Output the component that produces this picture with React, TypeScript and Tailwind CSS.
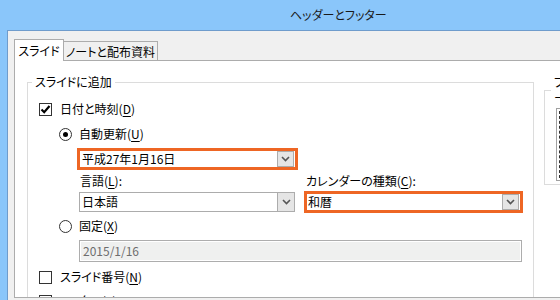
import React from 'react';

const font = { fontFamily: '"Noto Sans CJK JP", "Noto Sans", sans-serif' };

function Chevron() {
  return (
    <svg width="9" height="6" viewBox="0 0 9 6">
      <path d="M1 1 L4.5 4.5 L8 1" fill="none" stroke="#555" strokeWidth="1.6" />
    </svg>
  );
}

function DropButton() {
  return (
    <div className="w-[17px] h-full flex items-center justify-center bg-[#e5e5e5] border-l border-[#acacac]">
      <Chevron />
    </div>
  );
}

function Check({ checked }: { checked?: boolean }) {
  return (
    <div className="w-[13px] h-[13px] border border-[#333] bg-white flex items-center justify-center">
      {checked && (
        <svg width="11" height="11" viewBox="0 0 11 11">
          <path d="M1.5 5.5 L4.2 8.2 L9.5 2" fill="none" stroke="#000" strokeWidth="2.2" />
        </svg>
      )}
    </div>
  );
}

function Radio({ checked }: { checked?: boolean }) {
  return (
    <div className="w-[13px] h-[13px] rounded-full border border-[#333] bg-white flex items-center justify-center">
      {checked && <div className="w-[5px] h-[5px] rounded-full bg-black" />}
    </div>
  );
}

function Label({ text, mn, tail = '' }: { text: string; mn: string; tail?: string }) {
  return (
    <span>
      {text}(<span className="underline underline-offset-2">{mn}</span>){tail}
    </span>
  );
}

export default function App() {
  return (
    <div
      className="w-[560px] h-[300px] overflow-hidden bg-[#8ac6fa] flex flex-col text-[12px] leading-[16px] text-black [font-feature-settings:'palt']"
      style={font}
    >
      {/* title bar */}
      <div className="h-[30px] shrink-0 flex items-center pl-[290px] text-[#1a1a1a]">
        ヘッダーとフッター
      </div>

      {/* dialog body */}
      <div className="flex-1 min-h-0 ml-[7px] bg-[#f0f0f0] border-t border-l border-[#6f9ccc] pt-[8px] pl-[6px] flex flex-col">
        {/* tabs */}
        <div className="h-[21px] shrink-0 flex items-end">
          <div className="relative z-10 -mb-px h-[22px] w-[50px] bg-white border border-b-0 border-[#acacac] flex items-center justify-center whitespace-nowrap">
            スライド
          </div>
          <div className="h-[19px] w-[94px] border-t border-r border-[#acacac] flex items-center justify-center whitespace-nowrap pt-[1px]">
            ノートと配布資料
          </div>
        </div>

        {/* tab panel */}
        <div className="flex-1 min-h-0 overflow-hidden bg-white border-t border-l border-b border-[#acacac] pl-[12px] pt-[13px] flex gap-[10px] items-start">
          <fieldset className="w-[507px] shrink-0 border border-[#dcdcdc] h-[260px]">
            <legend className="ml-[4px] px-[3px] leading-[16px]">スライドに追加</legend>

            <div className="pl-[11px] mt-[11px] flex items-center gap-[8px] h-[16px]">
              <Check checked />
              <Label text="日付と時刻" mn="D" />
            </div>

            <div className="pl-[31px] mt-[9px] flex items-center gap-[7px] h-[16px]">
              <Radio checked />
              <Label text="自動更新" mn="U" />
            </div>

            <div className="ml-[49px] mt-[6px] w-[221px] h-[22px] border-[3px] border-[#ee6624] bg-white flex items-center">
              <div className="flex-1 pl-[2px]">平成27年1月16日</div>
              <div className="h-[16px] mr-[1px] border border-[#acacac] bg-[#e5e5e5] w-[17px] flex items-center justify-center">
                <Chevron />
              </div>
            </div>

            <div className="mt-[3px] flex h-[16px]">
              <div className="pl-[52px] w-[278px]">
                <Label text="言語" mn="L" tail=":" />
              </div>
              <div>
                <Label text="カレンダーの種類" mn="C" tail=":" />
              </div>
            </div>

            <div className="mt-[2px] flex items-center h-[22px]">
              <div className="ml-[51px] w-[216px] h-[20px] border border-[#acacac] bg-white flex items-center">
                <div className="flex-1 pl-[2px]">日本語</div>
                <DropButton />
              </div>
              <div className="ml-[9px] w-[219px] h-[22px] border-[3px] border-[#ee6624] bg-white flex items-center">
                <div className="flex-1 pl-[1px]">和暦</div>
                <div className="h-[16px] mr-[1px] border border-[#acacac] bg-[#e5e5e5] w-[17px] flex items-center justify-center">
                  <Chevron />
                </div>
              </div>
            </div>

            <div className="pl-[31px] mt-[5px] flex items-center gap-[7px] h-[16px]">
              <Radio />
              <Label text="固定" mn="X" />
            </div>

            <div className="ml-[51px] mt-[6px] w-[443px] h-[22px] border border-[#adadad] bg-white p-px">
              <div className="h-full bg-[#eff0ef] pl-[2px] flex items-center text-[#6d6d6d]">2015/1/16</div>
            </div>

            <div className="pl-[11px] mt-[7px] flex items-center gap-[8px] h-[16px]">
              <Check />
              <Label text="スライド番号" mn="N" />
            </div>

            <div className="pl-[11px] mt-[8px] flex items-center gap-[8px] h-[16px]">
              <Check />
              <Label text="フッター" mn="F" />
            </div>
          </fieldset>

          <fieldset className="w-[60px] shrink-0 h-[111px] border border-[#dcdcdc]">
            <legend className="ml-[6px] px-[3px] leading-[16px]">プレビュー</legend>
            <div className="ml-[11px] mt-[2px] h-[73px] border border-[#a0a0a0] pl-[2px] py-[2px]">
              <div className="h-full border-l border-dashed border-[#333]" />
            </div>
          </fieldset>
        </div>
        <div className="h-[2px] shrink-0" />
      </div>
    </div>
  );
}
